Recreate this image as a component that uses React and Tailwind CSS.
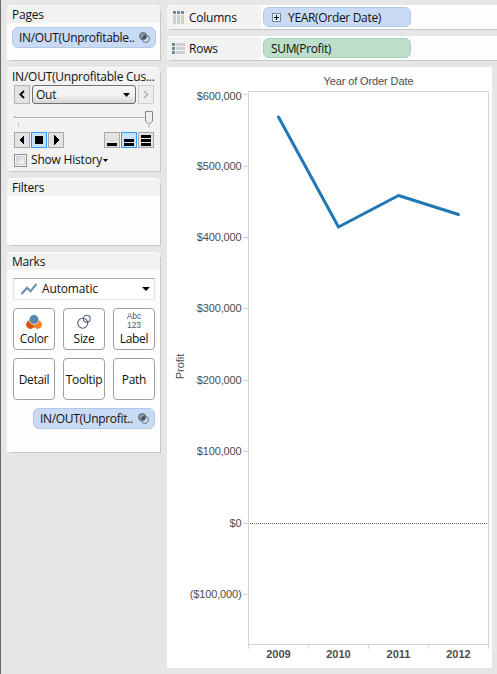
import React from "react";

function Panel({ title, className, children }) {
  return (
    <section className={`ml-px w-[153px] rounded-t-[5px] bg-[#fdfdfd] shadow-[2px_2px_0_-1px_#c6c6c6] ${className}`}>
      <h2 className="h-[18px] rounded-t-[5px] border-t border-white bg-[#f2f2f0] pl-[5px] leading-[18px]">{title}</h2>
      {children}
    </section>
  );
}

function SetIcon() {
  return (
    <svg width="11" height="11" viewBox="0 0 11 11" className="shrink-0">
      <circle cx="4.2" cy="4.2" r="3.6" fill="#8e9cab" stroke="#51606f" />
      <circle cx="6.8" cy="6.8" r="3.6" fill="#dce5f1" fillOpacity=".45" stroke="#64717f" />
      <path d="M3.3 6.6A3.6 3.6 0 0 1 6.6 3.3L7.7 4.8A3.6 3.6 0 0 1 4.8 7.7Z" fill="#46535f" />
    </svg>
  );
}

function SetPill({ text, className }) {
  return (
    <div className={`flex h-[21px] items-center justify-between rounded-[6px] border border-[#b0c8ea] bg-[#c9daf5] pr-[5px] pl-[6px] tracking-[-0.32px] ${className}`}>
      <span>{text}</span>
      <SetIcon />
    </div>
  );
}

function SquareButton({ active, children, className = "" }) {
  return (
    <button className={`flex size-4 items-center justify-center border ${active ? "border-[#3399ff] bg-[#c7e1fb]" : "border-[#a8a8a8] bg-[#e2e2e2]"} ${className}`}>
      <svg width="14" height="14" viewBox="0 0 14 14" shapeRendering="crispEdges">{children}</svg>
    </button>
  );
}

function PageControl() {
  return (
    <section className="mt-[7px] ml-px h-[104px] w-[153px] rounded-t-[5px] border-t border-white bg-[#f2f2f2] pl-px shadow-[2px_2px_0_-1px_#c6c6c6]">
      <h2 className="h-[17px] pl-1 leading-[18px] tracking-[-0.24px] whitespace-nowrap">IN/OUT(Unprofitable Cus...</h2>
      <div className="flex pl-[6px]">
        <button className="flex h-[19px] w-4 items-center justify-center border border-[#b4b4b4] bg-[#e3e3e3]">
          <svg width="8" height="9" viewBox="0 0 8 9"><path d="M6 1L2.4 4.5L6 8" fill="none" stroke="#000" strokeWidth="1.8" /></svg>
        </button>
        <div className="ml-[2px] flex h-[19px] w-[104px] items-center justify-between rounded-[3px] border border-[#707070] bg-linear-to-b from-[#f3f3f3] from-50% to-[#d6d6d6] pr-[5px] pl-[3px]">
          <span>Out</span>
          <svg width="7" height="4" viewBox="0 0 7 4"><path d="M0 0H7L3.5 4Z" /></svg>
        </div>
        <button className="ml-[2px] flex h-[19px] w-4 items-center justify-center border border-[#cfcfcf] bg-[#eeeeee]">
          <svg width="8" height="9" viewBox="0 0 8 9"><path d="M2 1L5.6 4.5L2 8" fill="none" stroke="#b0b0b0" strokeWidth="1.5" /></svg>
        </button>
      </div>
      <svg width="152" height="28" viewBox="0 0 152 28" className="block">
        <path d="M6 13.5H145M6.5 12V15" stroke="#adadad" fill="none" />
        <path d="M6 14.5H145" stroke="#fff" />
        <path d="M10.5 19V23" stroke="#c5c5c5" />
        <path d="M137.500 7.500H144.500V17L141 20.500L137.500 17Z" fill="#eeeeee" stroke="#858585" />
        <path d="M140 22.500H142" stroke="#aaa" />
      </svg>
      <div className="flex items-center pl-[6px]">
        <SquareButton><path d="M9 2V12L4 7Z" /></SquareButton>
        <SquareButton active className="ml-px"><path d="M3 3H11V11H3Z" /></SquareButton>
        <SquareButton className="ml-px"><path d="M5 2V12L10 7Z" /></SquareButton>
        <SquareButton className="ml-10"><path d="M2 10H12V13H2Z" /></SquareButton>
        <SquareButton active className="ml-px"><path d="M2 6H12V9H2ZM2 10H12V13H2Z" /></SquareButton>
        <SquareButton className="ml-px"><path d="M2 2H12V5H2ZM2 6H12V9H2ZM2 10H12V13H2Z" /></SquareButton>
      </div>
      <div className="mt-[3px] flex h-[18px] items-center pl-[6px]">
        <span className="size-[13px] border border-[#8e8f8f] bg-[#f4f4f4] p-px"><span className="block size-[9px] border border-[#cfd1d3] bg-linear-to-br from-[#d2d5d9] to-[#f7f7f7]" /></span>
        <span className="ml-[4px] tracking-[-0.2px]">Show History</span>
        <svg width="5" height="3" viewBox="0 0 5 3" className="ml-px"><path d="M0 0H5L2.500 3Z" /></svg>
      </div>
    </section>
  );
}

function MarkButton({ label, children }) {
  return (
    <button className={`flex size-[42px] flex-col items-center rounded-[4px] border border-[#a0a0a0] bg-white tracking-[-0.3px] whitespace-nowrap ${children ? "" : "justify-center"}`}>
      {children && <span className="flex h-[21px] items-end">{children}</span>}
      <span className="leading-[17px]">{label}</span>
    </button>
  );
}

function MarksCard() {
  return (
    <Panel title="Marks" className="mt-[7px] h-[200px]">
      <div className="mt-2 ml-[6px] flex h-[22px] w-[142px] items-center border border-[#e2e3ea] border-t-[#abadb3] bg-white pr-[4px] pl-[7px]">
        <svg width="16" height="12" viewBox="0 0 16 12"><path d="M.5 11L6 4.800L9.500 8.200L15.500 1" fill="none" stroke="#6090b4" strokeWidth="2" /></svg>
        <span className="ml-[5px] grow tracking-[-0.15px]">Automatic</span>
        <svg width="8" height="4" viewBox="0 0 8 4"><path d="M0 0H8L4 4Z" /></svg>
      </div>
      <div className="mt-[8px] ml-[6px] grid grid-cols-[repeat(3,42px)] gap-2">
        <MarkButton label="Color">
          <svg width="16" height="16" viewBox="0 0 16 16">
            <circle cx="4.500" cy="10.500" r="4.400" fill="#d65507" /><circle cx="11.500" cy="10.500" r="4.400" fill="#ff8126" />
            <circle cx="8" cy="5.500" r="4.900" fill="#5b89ad" stroke="#fff" strokeWidth=".7" />
          </svg>
        </MarkButton>
        <MarkButton label="Size">
          <svg width="14" height="16" viewBox="0 0 14 16" fill="none" stroke="#526075" strokeWidth="1.100"><circle cx="5.700" cy="9.200" r="5" /><circle cx="9.800" cy="4.700" r="3.400" /></svg>
        </MarkButton>
        <MarkButton label="Label">
          <span className="flex flex-col text-center font-['Liberation_Sans',Arial,sans-serif] text-[8.5px] leading-[9px] tracking-normal text-[#46566e]"><span>Abc</span><span>123</span></span>
        </MarkButton>
        <MarkButton label="Detail" />
        <MarkButton label="Tooltip" />
        <MarkButton label="Path" />
      </div>
      <SetPill text="IN/OUT(Unprofit.." className="mt-[8px] ml-[26px] w-[122px]" />
    </Panel>
  );
}

function Shelf({ label, icon, children }) {
  return (
    <div className="flex h-6 rounded-tl-[5px] bg-[#fdfdfd] shadow-[2px_2px_0_-1px_#c6c6c6]">
      <div className="flex w-[94px] items-center rounded-tl-[5px] border-t border-white bg-[#f2f2f0] pl-[5px]">
        {icon}
        <span className="ml-[4px]">{label}</span>
      </div>
      <div className="ml-[2px] pt-[2px]">{children}</div>
    </div>
  );
}

const ticks = [
  ["$600,000", 94.5],
  ["$500,000", 166.5],
  ["$400,000", 237.5],
  ["$300,000", 308.5],
  ["$200,000", 380.5],
  ["$100,000", 451.5],
  ["$0", 523.5],
  ["($100,000)", 594.5],
];

function ProfitChart() {
  return (
    <svg width="325" height="601" viewBox="167 67 325 601" className="block font-['Liberation_Sans',Arial,sans-serif] text-[11px] tracking-normal" fill="#4d4d4d">
      <g fill="none" stroke="#d4d4d4" shapeRendering="crispEdges">
        <path d="M248.500 649V91.500H488.500V649M248 644.500H489M308.500 644V649M368.500 644V649M428.500 644V649" />
        {ticks.map(([label, y]) => <path key={label} d={`M243 ${y}H248`} />)}
      </g>
      <text x="368.500" y="85" textAnchor="middle" textLength="90">Year of Order Date</text>
      <g textAnchor="end" className="tracking-[-0.15px]">
        {ticks.map(([label, y]) => (
          <text key={label} x="241.500" y={y === 94.5 ? 100 : y + 3.5}>{label}</text>
        ))}
      </g>
      <text transform="translate(184 366.500) rotate(-90)" textAnchor="middle">Profit</text>
      <path d="M250 523.500H488" stroke="#5c5c5c" strokeDasharray="1 1" shapeRendering="crispEdges" />
      <path d="M278.500 117L338.500 227L398.500 195.500L458.500 214.500" fill="none" stroke="#1f77b4" strokeWidth="3" strokeLinecap="round" strokeLinejoin="round" />
      <g fontWeight="bold" textAnchor="middle">
        <text x="278.500" y="658">2009</text><text x="338.500" y="658">2010</text>
        <text x="398.500" y="658">2011</text><text x="458.500" y="658">2012</text>
      </g>
    </svg>
  );
}

export default function App() {
  return (
    <main className="flex h-[674px] w-[497px] overflow-hidden border-l border-[#696969] bg-[#e6e6e6] font-['Open_Sans','Noto_Sans',sans-serif] text-[12px] tracking-[-0.25px] text-[#111]">
      <aside className="w-[160px] shrink-0 pt-[5px] pl-[5px]">
        <Panel title="Pages" className="h-[55px]">
          <SetPill text="IN/OUT(Unprofitable.." className="mt-[4px] ml-[5px] w-[144px]" />
        </Panel>
        <PageControl />
        <Panel title="Filters" className="mt-[7px] h-[67px]" />
        <MarksCard />
      </aside>
      <div className="min-w-0 grow pt-[5px] pl-[6px]">
        <div className="flex flex-col gap-[7px]">
          <Shelf label="Columns" icon={
            <svg width="13" height="13" viewBox="0 0 13 13"><path d="M1 0H4V3H1ZM5 0H8V3H5ZM9 0H12V3H9Z" fill="#71899b" /><path d="M1 4H4V13H1ZM5 4H8V13H5ZM9 4H12V13H9Z" fill="#cfcfcf" /></svg>
          }>
            <div className="flex h-5 w-[148px] items-center rounded-[6px] border border-[#b0c8ea] bg-[#c9daf5] pt-px pl-[8px] tracking-[-0.32px]">
              <svg width="9" height="9" viewBox="0 0 9 9" shapeRendering="crispEdges"><path d="M.5.5H8.500V8.500H.5Z" fill="#e0e9f7" stroke="#76869c" /><path d="M2 4.500H7M4.500 2V7" stroke="#000" /></svg>
              <span className="ml-[7px]">YEAR(Order Date)</span>
            </div>
          </Shelf>
          <Shelf label="Rows" icon={
            <svg width="13" height="13" viewBox="0 0 13 13"><path d="M0 1H3V4H0ZM0 5H3V8H0ZM0 9H3V12H0Z" fill="#71899b" /><path d="M4 1H13V4H4ZM4 5H13V8H4ZM4 9H13V12H4Z" fill="#cfcfcf" /></svg>
          }>
            <div className="flex h-5 w-[148px] items-center rounded-[6px] border border-[#a8ceb6] bg-[#bddec9] pt-px pl-[7px] tracking-[-0.35px]">SUM(Profit)</div>
          </Shelf>
        </div>
        <div className="mt-[7px] w-[325px] bg-white"><ProfitChart /></div>
      </div>
    </main>
  );
}
